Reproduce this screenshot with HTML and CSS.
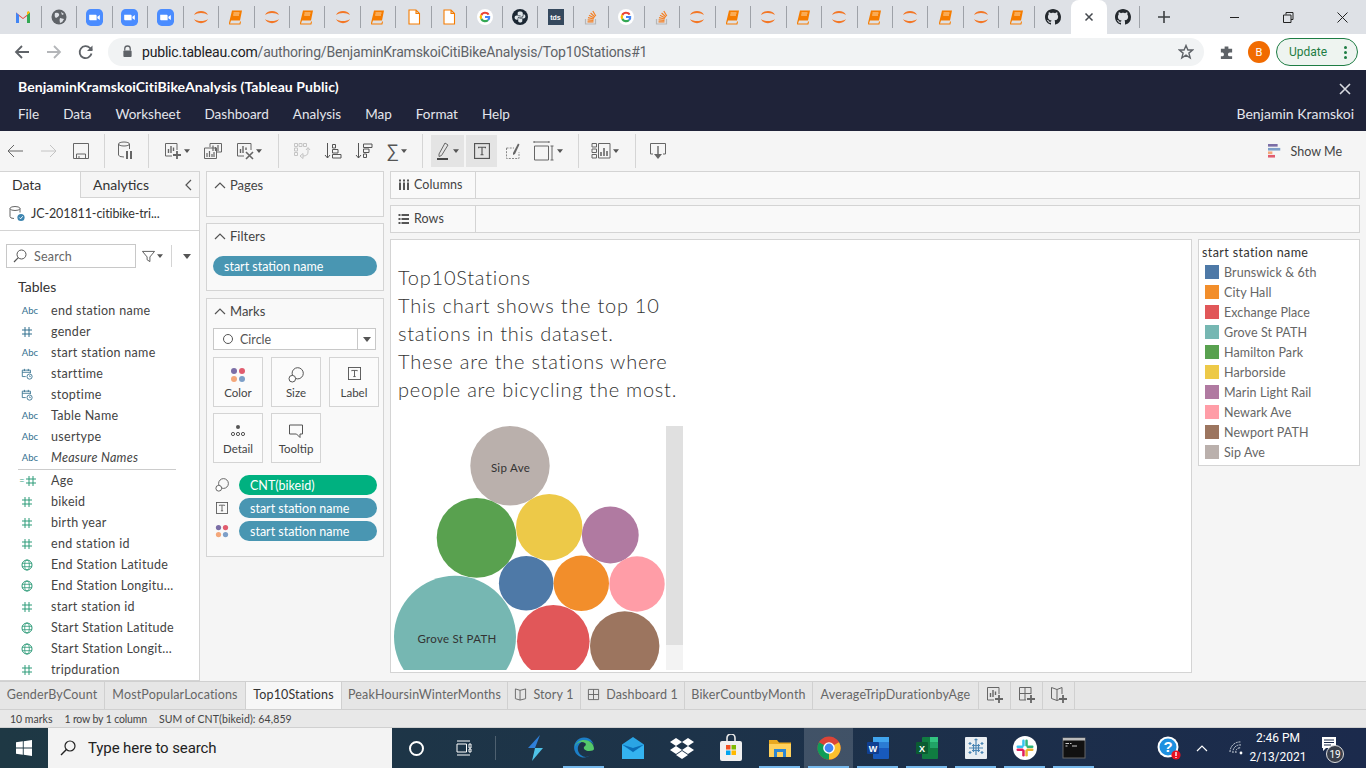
FILE: index.html
```html
<!DOCTYPE html>
<html lang="en">
<head>
<meta charset="utf-8">
<title>Top10Stations</title>
<link rel="stylesheet" href="styles.css">
</head>
<body>
<svg class="defs" width="0" height="0" aria-hidden="true">
  <symbol id="jup" viewBox="0 0 16 16"><path d="M1 6C3 0.5 13 0.5 15 6C11.5 3.2 4.5 3.2 1 6Z" fill="#f37726"/><path d="M1 10C3 15.5 13 15.5 15 10C11.5 12.8 4.5 12.8 1 10Z" fill="#f37726"/></symbol>
  <symbol id="book" viewBox="0 0 16 16"><path d="M4 1.5H14L12 11.5H3L2 14.5H11.5L12 12.5H13L12.4 15.5H1.2L1 14Z" fill="#f57c00"/><path d="M5.5 4H11.5M5.2 6H11" stroke="#ffd9a8" stroke-width="1"/></symbol>
  <symbol id="doc" viewBox="0 0 16 16"><path d="M3 1H10L13.5 4.5V15H3Z M10 1V4.5H13.5" fill="#fff" stroke="#f57c00" stroke-width="1.1"/></symbol>
  <symbol id="goog" viewBox="0 0 16 16"><circle cx="8" cy="8" r="8" fill="#fff"/><path d="M12.5 5.2A5.3 5.3 0 0 0 3.4 5.3L5.2 6.7A3.2 3.2 0 0 1 10.6 5.9Z" fill="#ea4335"/><path d="M3.4 5.3A5.3 5.3 0 0 0 3.4 10.7L5.2 9.3A3.2 3.2 0 0 1 5.2 6.7Z" fill="#fbbc05"/><path d="M3.4 10.7A5.3 5.3 0 0 0 11.8 11.7L10.1 10.4A3.2 3.2 0 0 1 5.2 9.3Z" fill="#34a853"/><path d="M13.2 7H8V9.1H11A2.6 2.6 0 0 1 10.1 10.4L11.8 11.7A5.3 5.3 0 0 0 13.2 7Z" fill="#4285f4"/></symbol>
  <symbol id="github" viewBox="0 0 16 16"><path fill="#24292e" d="M8 0C3.58 0 0 3.58 0 8c0 3.54 2.29 6.53 5.47 7.59.4.07.55-.17.55-.38 0-.19-.01-.82-.01-1.49-2.01.37-2.53-.49-2.69-.94-.09-.23-.48-.94-.82-1.13-.28-.15-.68-.52-.01-.53.63-.01 1.08.58 1.23.82.72 1.21 1.87.87 2.33.66.07-.52.28-.87.51-1.07-1.78-.2-3.64-.89-3.64-3.95 0-.87.31-1.59.82-2.15-.08-.2-.36-1.02.08-2.12 0 0 .67-.21 2.2.82.64-.18 1.32-.27 2-.27s1.36.09 2 .27c1.53-1.04 2.2-.82 2.2-.82.44 1.1.16 1.92.08 2.12.51.56.82 1.27.82 2.15 0 3.07-1.87 3.75-3.65 3.95.29.25.54.73.54 1.48 0 1.07-.01 1.93-.01 2.2 0 .21.15.46.55.38A8 8 0 0 0 16 8c0-4.42-3.58-8-8-8z"/></symbol>
  <symbol id="so" viewBox="0 0 16 16"><path d="M2.5 10V15H12.5V10" fill="none" stroke="#b7b7b7" stroke-width="1.2"/><path d="M4.5 12.8H10.5M4.6 10.8L10.5 11.4M5 8.6L10.8 10M6 6.3L11.2 9M7.6 4L12 8M9.8 2L12.8 7" stroke="#f48024" stroke-width="1.2" fill="none"/></symbol>
  <symbol id="zoomcam" viewBox="0 0 16 16"><rect width="16" height="16" rx="4.5" fill="#4a8cff"/><path d="M3 5.5H9.2Q10 5.5 10 6.3V10.5H3.8Q3 10.5 3 9.7ZM10.7 7.3L13 5.6V10.4L10.7 8.7Z" fill="#fff"/></symbol>
  <symbol id="colors" viewBox="0 0 16 16"><circle cx="4" cy="4" r="3" fill="#7b6ea6"/><circle cx="12" cy="4" r="3" fill="#e15c6e"/><circle cx="4" cy="12" r="3" fill="#f4a77a"/><circle cx="12" cy="12" r="3" fill="#7d9fc8"/></symbol>
  <symbol id="size" viewBox="0 0 16 16"><circle cx="9.7" cy="6.3" r="5.6" fill="none" stroke="#555" stroke-width="1"/><circle cx="4.3" cy="11.7" r="3.3" fill="#fff" stroke="#555" stroke-width="1"/></symbol>
  <symbol id="tbox" viewBox="0 0 14 14"><rect x=".5" y=".5" width="13" height="13" fill="none" stroke="#555"/><path d="M4 4.5V3.7H10V4.5M7 3.7V10.3M5.7 10.3H8.3" fill="none" stroke="#555"/></symbol>
  <symbol id="hash" viewBox="0 0 12 12"><path d="M4 1V11M8 1V11M1 4H11M1 8H11" fill="none" stroke="currentColor" stroke-width="1"/></symbol>
  <symbol id="globe" viewBox="0 0 12 12"><circle cx="6" cy="6" r="5" fill="none" stroke="currentColor"/><ellipse cx="6" cy="6" rx="2.3" ry="5" fill="none" stroke="currentColor" stroke-width=".8"/><path d="M1 4.3H11M1 7.7H11" stroke="currentColor" stroke-width=".8"/></symbol>
  <symbol id="cal" viewBox="0 0 14 14"><path d="M5.5 10H1.5V2.5H11V6M1.5 5H11M4 1V3.5M8.5 1V3.5" fill="none" stroke="currentColor"/><circle cx="10" cy="10" r="3" fill="#fff" stroke="currentColor"/><path d="M10 8.5V10H11.5" fill="none" stroke="currentColor" stroke-width=".8"/></symbol>
  <symbol id="caret" viewBox="0 0 8 5"><path d="M0 0H8L4 5Z" fill="currentColor"/></symbol>
  <symbol id="chev" viewBox="0 0 12 7"><path d="M1 6L6 1L11 6" fill="none" stroke="#555" stroke-width="1.2"/></symbol>
  <symbol id="plus-ws" viewBox="0 0 18 18"><path d="M8 14H1.5V1.5H13V8" fill="none" stroke="#666"/><path d="M4.5 11V7M7 11V4M9.5 9V5.5" stroke="#666" stroke-width="1.4"/><path d="M13 9V17M9 13H17" stroke="#666" stroke-width="1.8"/></symbol>
  <symbol id="plus-db" viewBox="0 0 18 18"><path d="M8 14H1.5V1.5H13V8M7 1.5V14M1.5 7.5H13" fill="none" stroke="#666"/><path d="M13 9V17M9 13H17" stroke="#666" stroke-width="1.8"/></symbol>
  <symbol id="plus-st" viewBox="0 0 18 18"><path d="M7 3.5L1.5 1.5V12.5L7 14.5ZM7 3.5L12 1.5V8M7 14.5L9 13.7" fill="none" stroke="#666"/><path d="M13 9V17M9 13H17" stroke="#666" stroke-width="1.8"/></symbol>
</svg>

<header class="chrome">
  <div class="tabstrip">
    <div class="ftab"><svg viewBox="0 0 16 16" class="fav"><path d="M1 14V3.5L8 9L15 3.5V14H12V7L8 10L4 7V14Z" fill="#ea4335"/><path d="M1 14V3.5L4 6V14Z" fill="#4285f4"/><path d="M15 14V3.5L12 6V14Z" fill="#34a853"/><path d="M12 6L15 3.5L13.5 2L12 3Z" fill="#fbbc05"/></svg></div>
    <div class="ftab"><svg viewBox="0 0 16 16" class="fav"><circle cx="8" cy="8" r="7.5" fill="#5f6368"/><path d="M4 4Q7 3 8 5T5 9Q3 8 4 4ZM9 9L13 10Q12 13 9 14Q8 11 9 9ZM10 3L13 5L11 6Z" fill="#dee1e6"/></svg></div>
    <div class="ftab"><svg class="fav fav-l"><use href="#zoomcam"/></svg></div>
    <div class="ftab"><svg class="fav fav-l"><use href="#zoomcam"/></svg></div>
    <div class="ftab"><svg class="fav fav-l"><use href="#zoomcam"/></svg></div>
    <div class="ftab"><svg class="fav"><use href="#jup"/></svg></div>
    <div class="ftab"><svg class="fav"><use href="#book"/></svg></div>
    <div class="ftab"><svg class="fav"><use href="#jup"/></svg></div>
    <div class="ftab"><svg class="fav"><use href="#book"/></svg></div>
    <div class="ftab"><svg class="fav"><use href="#jup"/></svg></div>
    <div class="ftab"><svg class="fav"><use href="#book"/></svg></div>
    <div class="ftab"><svg class="fav"><use href="#doc"/></svg></div>
    <div class="ftab"><svg class="fav"><use href="#doc"/></svg></div>
    <div class="ftab"><svg class="fav"><use href="#goog"/></svg></div>
    <div class="ftab"><svg viewBox="0 0 16 16" class="fav"><circle cx="8" cy="8" r="8" fill="#1b2733"/><path d="M8 2.5C5.5 2.5 5.7 3.6 5.7 5V6H8.6V6.6H4.6C3.4 6.6 2.6 7.3 2.6 8.6S3.4 10.8 4.6 10.8H5.7V9.3C5.7 8.4 6.4 7.8 7.2 7.8H9.6C10.3 7.8 10.8 7.2 10.8 6.5V4.2C10.8 3.1 9.7 2.5 8 2.5Z" fill="#dfe6ea"/><path d="M8 13.5C10.5 13.5 10.3 12.4 10.3 11V10H7.4V9.4H11.4C12.6 9.4 13.4 8.7 13.4 7.4S12.6 5.2 11.4 5.2V6.7C11.4 7.6 10.7 8.6 9.9 8.6H7.4C6.7 8.6 6.2 9.1 6.2 9.8V11.8C6.2 12.9 6.8 13.5 8 13.5Z" fill="#dfe6ea"/></svg></div>
    <div class="ftab"><span class="tds">tds</span></div>
    <div class="ftab"><svg class="fav"><use href="#so"/></svg></div>
    <div class="ftab"><svg class="fav"><use href="#goog"/></svg></div>
    <div class="ftab"><svg class="fav"><use href="#so"/></svg></div>
    <div class="ftab"><svg class="fav"><use href="#jup"/></svg></div>
    <div class="ftab"><svg class="fav"><use href="#book"/></svg></div>
    <div class="ftab"><svg class="fav"><use href="#jup"/></svg></div>
    <div class="ftab"><svg class="fav"><use href="#book"/></svg></div>
    <div class="ftab"><svg class="fav"><use href="#jup"/></svg></div>
    <div class="ftab"><svg class="fav"><use href="#book"/></svg></div>
    <div class="ftab"><svg class="fav"><use href="#jup"/></svg></div>
    <div class="ftab"><svg class="fav"><use href="#book"/></svg></div>
    <div class="ftab"><svg class="fav"><use href="#jup"/></svg></div>
    <div class="ftab"><svg class="fav"><use href="#book"/></svg></div>
    <div class="ftab no-sep"><svg class="fav"><use href="#github"/></svg></div>
    <div class="atab"><svg viewBox="0 0 10 10" class="x-ic"><path d="M1.5 1.5L8.5 8.5M8.5 1.5L1.5 8.5" stroke="#45494e" stroke-width="1.5"/></svg></div>
    <div class="ftab gh2"><svg class="fav"><use href="#github"/></svg></div>
    <svg viewBox="0 0 12 12" class="plus-ic"><path d="M6 0V12M0 6H12" stroke="#3c4043" stroke-width="1.6"/></svg>
    <div class="winctl">
      <svg viewBox="0 0 11 11" class="wbtn"><path d="M1 5.5H10" stroke="#222" stroke-width="1"/></svg>
      <svg viewBox="0 0 11 11" class="wbtn"><path d="M3 2.5V.5H10V7.5H8M.5 3H8V10.5H.5Z" fill="none" stroke="#222"/></svg>
      <svg viewBox="0 0 11 11" class="wbtn"><path d="M.5 .5L10.5 10.5M10.5 .5L.5 10.5" stroke="#222"/></svg>
    </div>
  </div>
  <div class="addrbar">
    <svg viewBox="0 0 16 16" class="nav-ic"><path d="M15 8H2M8 2L2 8L8 14" fill="none" stroke="#5f6368" stroke-width="1.8"/></svg>
    <svg viewBox="0 0 16 16" class="nav-ic"><path d="M1 8H14M8 2L14 8L8 14" fill="none" stroke="#b4b6b9" stroke-width="1.8"/></svg>
    <svg viewBox="0 0 16 16" class="nav-ic"><path d="M13.5 9.5A6 6 0 1 1 12 4L14 6" fill="none" stroke="#5f6368" stroke-width="1.8"/><path d="M14.5 1.5V7H9Z" fill="#5f6368"/></svg>
    <div class="omni">
      <svg viewBox="0 0 12 14" class="lock"><path d="M3 6V4A3 3 0 0 1 9 4V6" fill="none" stroke="#5f6368" stroke-width="1.4"/><rect x="1.5" y="6" width="9" height="7" rx="1" fill="#5f6368"/></svg>
      <span class="url"><b>public.tableau.com</b>/authoring/BenjaminKramskoiCitiBikeAnalysis/Top10Stations#1</span>
      <svg viewBox="0 0 16 16" class="star"><path d="M8 1.5L9.9 6H14.7L10.9 9.1L12.2 14L8 11.2L3.8 14L5.1 9.1L1.3 6H6.1Z" fill="none" stroke="#5f6368" stroke-width="1.4"/></svg>
    </div>
    <svg viewBox="0 0 16 16" class="ext"><path d="M6 1.5H10V4H14V8H11.5A2 2 0 0 0 11.5 12H14V15H2V12H4A2.2 2.2 0 0 0 4 8H2V4H6Z" fill="#5f6368"/></svg>
    <span class="avatar">B</span>
    <div class="update"><span>Update</span><span class="dots"><i></i><i></i><i></i></span></div>
  </div>
</header>

<div class="tb-head">
  <div class="tb-title">BenjaminKramskoiCitiBikeAnalysis (Tableau Public)</div>
  <svg viewBox="0 0 12 12" class="tb-close"><path d="M1 1L11 11M11 1L1 11" stroke="#d8dae0" stroke-width="1.6"/></svg>
  <nav class="tb-menu">
    <span>File</span><span>Data</span><span>Worksheet</span><span>Dashboard</span><span>Analysis</span><span>Map</span><span>Format</span><span>Help</span>
    <em class="tb-user">Benjamin Kramskoi</em>
  </nav>
</div>

<div class="tools">
  <div class="tg g1">
    <svg viewBox="0 0 18 18" class="ti"><path d="M17 9H2M8 3L2 9L8 15" fill="none" stroke="#666"/></svg>
    <svg viewBox="0 0 18 18" class="ti"><path d="M1 9H16M10 3L16 9L10 15" fill="none" stroke="#c4c4c4"/></svg>
    <svg viewBox="0 0 18 18" class="ti ti-save"><path d="M1.5 1.5H16.5V16.5H1.5ZM4.5 16V12H13.5V16M7 16V14" fill="none" stroke="#666"/></svg>
  </div>
  <div class="tg g2">
    <svg viewBox="0 0 18 20" class="ti ti20"><ellipse cx="7" cy="3" rx="5.5" ry="2" fill="none" stroke="#666"/><path d="M1.5 3V14Q1.5 16 7 16M12.5 3V8" fill="none" stroke="#666"/><path d="M10 10V18M14 10V18" stroke="#666" stroke-width="2"/></svg>
  </div>
  <div class="tg g3">
    <span class="tw"><svg class="ti"><use href="#plus-ws"/></svg><svg class="cr"><use href="#caret"/></svg></span>
    <svg viewBox="0 0 20 18" class="ti ti20w"><path d="M7 5V1.5H18.5V10H13.5M1.5 6H13.5V16.5H1.5Z" fill="#f5f5f5" stroke="#666"/><path d="M4 15V11M6.5 15V9M9 15V12M11 15V10M10 9V3.5M12.5 9V5M15 9V3" stroke="#666" stroke-width="1.2"/></svg>
    <span class="tw"><svg viewBox="0 0 18 18" class="ti"><path d="M8 14H1.5V1.5H15V8" fill="none" stroke="#666"/><path d="M4.5 11V7M7 11V4M10 8V5.5" stroke="#666" stroke-width="1.4"/><path d="M10 10L17 17M17 10L10 17" stroke="#666" stroke-width="1.6"/></svg><svg class="cr"><use href="#caret"/></svg></span>
  </div>
  <div class="tg g4">
    <svg viewBox="0 0 18 18" class="ti"><path d="M1.5 1.5H4.5V4.5H1.5ZM6 1.5H9V4.5H6ZM10.5 1.5H13.5V4.5H10.5ZM1.5 6H4.5V9H1.5ZM1.5 10.5H4.5V13.5H1.5Z" fill="none" stroke="#c4c4c4"/><path d="M15 6V10Q15 14 10 14M7 14L10 11.5V16.5ZM13 8L15 5.5L17 8" fill="none" stroke="#c4c4c4"/></svg>
    <svg viewBox="0 0 18 18" class="ti"><path d="M3.5 1V16M1 13L3.5 16L6 13" fill="none" stroke="#555"/><path d="M8.5 2.5H11.5V6H8.5ZM8.5 7.5H14V11H8.5ZM8.5 12.5H17V16H8.5Z" fill="none" stroke="#555"/></svg>
    <svg viewBox="0 0 18 18" class="ti"><path d="M3.5 1V16M1 13L3.5 16L6 13" fill="none" stroke="#555"/><path d="M8.5 2H17V5.5H8.5ZM8.5 7H14V10.5H8.5ZM8.5 12H11.5V15.5H8.5Z" fill="none" stroke="#555"/></svg>
    <span class="tw"><span class="sigma">∑</span><svg class="cr"><use href="#caret"/></svg></span>
  </div>
  <div class="tg g5">
    <span class="tbtn hl"><svg viewBox="0 0 14 20" class="ti ti-h"><path d="M3 13L9 2L12 4L5.5 14.5L3 15.5Z" fill="none" stroke="#666"/><path d="M1 18H12" stroke="#444" stroke-width="2"/></svg><svg class="cr"><use href="#caret"/></svg></span>
    <span class="tbtn ts"><svg class="ti ti-t"><use href="#tbox"/></svg></span>
    <svg viewBox="0 0 18 18" class="ti"><path d="M1.5 6H9M1.5 6V16.5H14V10" fill="none" stroke="#888" stroke-dasharray="2 1.2"/><path d="M8 11L13 1.5L14.5 2.5L10 12L8 13Z" fill="#666"/></svg>
    <span class="tw fitw"><svg viewBox="0 0 22 20" class="ti ti-fit"><path d="M1 1H16M1 0V2M16 0V2M1.5 5H15.5V19H1.5ZM19 5V19M17.5 5H20.5M17.5 19H20.5" fill="none" stroke="#666"/></svg><svg class="cr"><use href="#caret"/></svg></span>
  </div>
  <div class="tg g6">
    <span class="tw"><svg viewBox="0 0 20 18" class="ti ti20w"><path d="M1 1.5H5.5V5H1ZM1 7H5.5V10.5H1ZM1 12.5H5.5V16H1ZM7.5 1.5H19V16H7.5Z" fill="none" stroke="#666"/><path d="M10 14V10M13 14V6M16 14V9" stroke="#666" stroke-width="1.6"/></svg><svg class="cr"><use href="#caret"/></svg></span>
  </div>
  <div class="tg g7">
    <svg viewBox="0 0 18 18" class="ti"><path d="M4 12H1.5V1.5H16.5V12H14" fill="none" stroke="#666"/><path d="M9 4V13" stroke="#666" stroke-width="1.4"/><path d="M5 12H13L9 17Z" fill="#666"/></svg>
  </div>
  <div class="showme">
    <svg viewBox="0 0 16 16" class="sm-ic"><rect x="0" y="0" width="11" height="3" fill="#7b6ea6"/><rect x="0" y="4.5" width="14" height="3" fill="#7d9fc8"/><rect x="0" y="8.5" width="5" height="3" fill="#f4a77a"/><rect x="0" y="12.5" width="8" height="3" fill="#e15c6e"/></svg>
    <span>Show Me</span>
  </div>
</div>

<main class="work">
  <aside class="dpane">
    <div class="dtabs">
      <div class="dtab on">Data</div>
      <div class="dtab off">Analytics<svg viewBox="0 0 7 12" class="coll"><path d="M6 1L1 6L6 11" fill="none" stroke="#555" stroke-width="1.2"/></svg></div>
    </div>
    <div class="dsrc">
      <svg viewBox="0 0 16 16" class="dsrc-ic"><ellipse cx="6" cy="3" rx="5" ry="2" fill="none" stroke="#666"/><path d="M1 3V11Q1 13 5 13M11 3V7" fill="none" stroke="#666"/><circle cx="12" cy="12" r="3.6" fill="#3d85b0"/><path d="M10.3 12L11.6 13.3L13.7 10.8" fill="none" stroke="#fff"/></svg>
      <span>JC-201811-citibike-tri...</span>
    </div>
    <div class="dsearch">
      <div class="sbox"><svg viewBox="0 0 14 14" class="sic"><circle cx="8.5" cy="5.5" r="4.5" fill="none" stroke="#555"/><path d="M5.3 8.7L1 13" stroke="#555" stroke-width="1.2"/></svg><span>Search</span></div>
      <svg viewBox="0 0 14 14" class="fic"><path d="M.5 1.5H13.5L8.5 7.5V12.5L5.5 10.5V7.5Z" fill="none" stroke="#555"/></svg>
      <svg class="cr cr-d"><use href="#caret"/></svg>
      <i class="vsep"></i>
      <svg class="cr cr-e"><use href="#caret"/></svg>
    </div>
    <div class="tables">Tables</div>
    <ul class="fields">
      <li><span class="fi abc">Abc</span>end station name</li>
      <li><svg class="fi ic blue"><use href="#hash"/></svg>gender</li>
      <li><span class="fi abc">Abc</span>start station name</li>
      <li><svg class="fi ic blue"><use href="#cal"/></svg>starttime</li>
      <li><svg class="fi ic blue"><use href="#cal"/></svg>stoptime</li>
      <li><span class="fi abc">Abc</span>Table Name</li>
      <li><span class="fi abc">Abc</span>usertype</li>
      <li class="mn"><span class="fi abc">Abc</span><i>Measure Names</i></li>
      <li class="div"></li>
      <li><span class="fi calc"><b>=</b><svg class="ic grn"><use href="#hash"/></svg></span>Age</li>
      <li><svg class="fi ic grn"><use href="#hash"/></svg>bikeid</li>
      <li><svg class="fi ic grn"><use href="#hash"/></svg>birth year</li>
      <li><svg class="fi ic grn"><use href="#hash"/></svg>end station id</li>
      <li><svg class="fi ic grn"><use href="#globe"/></svg>End Station Latitude</li>
      <li><svg class="fi ic grn"><use href="#globe"/></svg>End Station Longitu...</li>
      <li><svg class="fi ic grn"><use href="#hash"/></svg>start station id</li>
      <li><svg class="fi ic grn"><use href="#globe"/></svg>Start Station Latitude</li>
      <li><svg class="fi ic grn"><use href="#globe"/></svg>Start Station Longit...</li>
      <li><svg class="fi ic grn"><use href="#hash"/></svg>tripduration</li>
    </ul>
  </aside>

  <section class="cards">
    <div class="card c-pages"><h3><svg class="chev"><use href="#chev"/></svg>Pages</h3></div>
    <div class="card c-filters"><h3><svg class="chev"><use href="#chev"/></svg>Filters</h3><div class="pill blue-p">start station name</div></div>
    <div class="card c-marks">
      <h3><svg class="chev"><use href="#chev"/></svg>Marks</h3>
      <div class="mselect"><span class="mcirc"></span><span class="mname">Circle</span><span class="mdrop"><svg class="cr cr-m"><use href="#caret"/></svg></span></div>
      <div class="mgrid">
        <div class="mbtn"><svg class="mic"><use href="#colors"/></svg>Color</div>
        <div class="mbtn"><svg class="mic"><use href="#size"/></svg>Size</div>
        <div class="mbtn"><svg class="mic mic-t"><use href="#tbox"/></svg>Label</div>
        <div class="mbtn"><svg viewBox="0 0 16 16" class="mic"><circle cx="8" cy="4" r="2" fill="#555"/><circle cx="3" cy="11" r="1.6" fill="none" stroke="#555"/><circle cx="8" cy="11" r="1.6" fill="none" stroke="#555"/><circle cx="13" cy="11" r="1.6" fill="none" stroke="#555"/></svg>Detail</div>
        <div class="mbtn"><svg viewBox="0 0 16 16" class="mic"><path d="M1.5 2H14.5V11H12V14.5L8.5 11H1.5Z" fill="none" stroke="#555"/></svg>Tooltip</div>
      </div>
      <div class="mrow"><svg class="mri"><use href="#size"/></svg><div class="pill grn-p">CNT(bikeid)</div></div>
      <div class="mrow"><svg class="mri mri-t"><use href="#tbox"/></svg><div class="pill blue-p">start station name</div></div>
      <div class="mrow"><svg class="mri"><use href="#colors"/></svg><div class="pill blue-p">start station name</div></div>
    </div>
  </section>

  <section class="rightcol">
    <div class="shelf"><div class="shead"><svg viewBox="0 0 12 12" class="shic"><path d="M2 3.5V11M6 3.5V11M10 3.5V11" stroke="#555" stroke-width="2"/><path d="M2 .5V2.5M6 .5V2.5M10 .5V2.5" stroke="#555" stroke-width="2"/></svg>Columns</div></div>
    <div class="shelf"><div class="shead"><svg viewBox="0 0 12 12" class="shic"><path d="M3.5 2H11M3.5 6H11M3.5 10H11M.5 2H2.5M.5 6H2.5M.5 10H2.5" stroke="#555" stroke-width="2"/></svg>Rows</div></div>
    <div class="vizrow">
      <div class="viz">
        <div class="vtitle">Top10Stations<br>This chart shows the top 10<br>stations in this dataset.<br>These are the stations where<br>people are bicycling the most.</div>
        <div class="chart">
          <svg viewBox="0 0 275 244" class="bubbles">
            <g transform="translate(-391 -426)">
              <circle cx="510" cy="465.7" r="39.7" fill="#bab0ac"/>
              <circle cx="476.6" cy="537.8" r="39.9" fill="#59a14f"/>
              <circle cx="549.2" cy="527.2" r="33.2" fill="#edc948"/>
              <circle cx="610.3" cy="535" r="28.4" fill="#b07aa1"/>
              <circle cx="526.2" cy="583.3" r="27.3" fill="#4e79a7"/>
              <circle cx="581.3" cy="583.3" r="27.7" fill="#f28e2b"/>
              <circle cx="637" cy="584" r="27.7" fill="#ff9da7"/>
              <circle cx="455" cy="636.8" r="61" fill="#76b7b2"/>
              <circle cx="553.3" cy="641.3" r="36.3" fill="#e15759"/>
              <circle cx="624.7" cy="646" r="34.7" fill="#9c755f"/>
              <text x="510.5" y="471.5" class="blabel">Sip Ave</text>
              <text x="457" y="642.5" class="blabel">Grove St PATH</text>
            </g>
          </svg>
          <div class="vscroll"><i></i></div>
        </div>
      </div>
      <div class="legend">
        <div class="ltitle">start station name</div>
        <div class="litem"><i class="sw s1"></i>Brunswick &amp; 6th</div>
        <div class="litem"><i class="sw s2"></i>City Hall</div>
        <div class="litem"><i class="sw s3"></i>Exchange Place</div>
        <div class="litem"><i class="sw s4"></i>Grove St PATH</div>
        <div class="litem"><i class="sw s5"></i>Hamilton Park</div>
        <div class="litem"><i class="sw s6"></i>Harborside</div>
        <div class="litem"><i class="sw s7"></i>Marin Light Rail</div>
        <div class="litem"><i class="sw s8"></i>Newark Ave</div>
        <div class="litem"><i class="sw s9"></i>Newport PATH</div>
        <div class="litem"><i class="sw s10"></i>Sip Ave</div>
      </div>
    </div>
  </section>
</main>

<div class="sheettabs">
  <div class="stab w1">GenderByCount</div>
  <div class="stab w2">MostPopularLocations</div>
  <div class="stab w3 act">Top10Stations</div>
  <div class="stab w4">PeakHoursinWinterMonths</div>
  <div class="stab w5"><svg viewBox="0 0 14 14" class="stic"><path d="M6.5 2.5L1.5 1V11.5L6.5 13ZM6.5 2.5L12.5 1V11.5L6.5 13" fill="none" stroke="#666"/></svg>Story 1</div>
  <div class="stab w6"><svg viewBox="0 0 14 14" class="stic"><path d="M1.5 1.5H12.5V12.5H1.5ZM7 1.5V12.5M1.5 7H12.5" fill="none" stroke="#666"/></svg>Dashboard 1</div>
  <div class="stab w7">BikerCountbyMonth</div>
  <div class="stab w8">AverageTripDurationbyAge</div>
  <div class="stab wi"><svg class="stadd"><use href="#plus-ws"/></svg></div>
  <div class="stab wi"><svg class="stadd"><use href="#plus-db"/></svg></div>
  <div class="stab wi"><svg class="stadd"><use href="#plus-st"/></svg></div>
</div>
<div class="status"><span>10 marks</span><span class="st2">1 row by 1 column</span><span class="st3">SUM of CNT(bikeid): 64,859</span></div>

<footer class="taskbar">
  <div class="start"><svg viewBox="0 0 16 16" class="win"><path d="M0 2.3L6.8 1.3V7.6H0ZM7.7 1.2L16 0V7.6H7.7ZM0 8.4H6.8V14.7L0 13.7ZM7.7 8.4H16V16L7.7 14.8Z" fill="#fff"/></svg></div>
  <div class="tsearch"><svg viewBox="0 0 16 16" class="tsic"><circle cx="10" cy="6" r="5" fill="none" stroke="#222" stroke-width="1.2"/><path d="M6.4 9.6L1 15" stroke="#222" stroke-width="1.4"/></svg><span>Type here to search</span></div>
  <div class="tcell"><span class="cortana"></span></div>
  <div class="tcell"><svg viewBox="0 0 16 16" class="tv"><path d="M1 1H14M1 15H14M1 4H10.5V12H1ZM13 4H15V8H13ZM13 9H15V12H13Z" fill="none" stroke="#fff" stroke-width="1"/></svg></div>
  <i class="tksep"></i>
  <div class="tcell"><svg viewBox="0 0 20 26" class="tapp"><path d="M15 0L3 13H10Z" fill="#2f7fd8"/><path d="M18 13H10L7 26Z" fill="#4fc3e8"/></svg></div>
  <div class="tcell run"><svg viewBox="0 0 24 24" class="tico"><path d="M21 16A10 10 0 1 1 22 10C21 6 17 4.5 13 5C8 5.5 5 10 6 14.5C7 19 12 22 16 20.5C18 20 20 18 21 16Z" fill="#1c7fc8"/><path d="M22 13C22 8 18 4 12 4C8 4 4 6.5 2.7 10.5C5 6 10 5 13 7C15 8.4 13 10 12 11C11 13 14 15 17 15C20 15 22 14 22 13Z" fill="#54c96a"/></svg></div>
  <div class="tcell"><svg viewBox="0 0 24 24" class="tico"><path d="M1 8.5L12 1L23 8.5V23H1Z" fill="#2aa4e4"/><path d="M1 8.5L12 16L23 8.5L12 12Z" fill="#0a6cb6"/><path d="M1 9L12 16.5L23 9V23H1Z" fill="#34b3f0"/></svg></div>
  <div class="tcell"><svg viewBox="0 0 24 24" class="tico"><path d="M6 2L12 6L6 10L0 6ZM18 2L24 6L18 10L12 6ZM6 10L12 14L6 18L0 14ZM18 10L24 14L18 18L12 14ZM6 19L12 15L18 19L12 23Z" fill="#fff"/></svg></div>
  <div class="tcell"><svg viewBox="0 0 24 28" class="tico tico-t"><path d="M8 7V4A4 4 0 0 1 16 4V7" fill="none" stroke="#e8e8e8" stroke-width="1.6"/><rect x="1" y="7" width="22" height="20" rx="2" fill="#f0f0f0"/><rect x="7" y="11" width="4.5" height="4.5" fill="#f25022"/><rect x="12.5" y="11" width="4.5" height="4.5" fill="#7fba00"/><rect x="7" y="16.5" width="4.5" height="4.5" fill="#00a4ef"/><rect x="12.5" y="16.5" width="4.5" height="4.5" fill="#ffb900"/></svg></div>
  <div class="tcell run"><svg viewBox="0 0 24 24" class="tico"><path d="M1 4H9L11 6.5H23V21H1Z" fill="#e9a920"/><path d="M1 8H23V21H1Z" fill="#ffd15c"/><path d="M6 21V13H18V21H15V16H9V21Z" fill="#2b86d3"/></svg></div>
  <div class="tcell act run"><svg viewBox="0 0 24 24" class="tico"><circle cx="12" cy="12" r="11.5" fill="#db4437"/><path d="M12 12L22 6.2A11.5 11.5 0 0 1 12 23.5Z" fill="#fbc02d"/><path d="M12 12L12 23.5A11.5 11.5 0 0 1 2 6.2Z" fill="#0f9d58"/><circle cx="12" cy="12" r="5.8" fill="#fff"/><circle cx="12" cy="12" r="4.4" fill="#4285f4"/></svg></div>
  <div class="tcell run"><svg viewBox="0 0 24 24" class="tico"><rect x="7" y="1" width="16" height="22" rx="1" fill="#185abd"/><rect x="7" y="1" width="16" height="5.5" fill="#41a5ee"/><rect x="7" y="6.5" width="16" height="5.5" fill="#2b7cd3"/><rect x="1" y="6" width="12" height="12" rx="1" fill="#103f91"/><text x="7" y="15.6" class="wl">W</text></svg></div>
  <div class="tcell run"><svg viewBox="0 0 24 24" class="tico"><rect x="7" y="1" width="16" height="22" rx="1" fill="#107c41"/><rect x="15" y="1" width="8" height="5.5" fill="#33c481"/><rect x="15" y="6.5" width="8" height="5.5" fill="#21a366"/><rect x="1" y="6" width="12" height="12" rx="1" fill="#0b5c32"/><text x="7" y="15.6" class="wl">X</text></svg></div>
  <div class="tcell run"><svg viewBox="0 0 24 24" class="tico"><rect x="1" y="1" width="22" height="22" rx="1" fill="#e9eef2"/><path d="M12 5V19M5 12H19M12 2.5V5M10.5 3.7H13.5M18 6V9M16.5 7.5H19.5M18 15V18M16.5 16.5H19.5M6 6V9M4.5 7.5H7.5M6 15V18M4.5 16.5H7.5M8 9.5H16M8 14.5H16M9.5 8V16M14.5 8V16" stroke="#4b86b4" stroke-width="1.2" fill="none"/></svg></div>
  <div class="tcell run"><svg viewBox="0 0 24 24" class="tico"><circle cx="12" cy="12" r="12" fill="#fff"/><rect x="9.2" y="3.5" width="2.5" height="7" rx="1.2" fill="#36c5f0"/><rect x="3.5" y="9.5" width="7" height="2.5" rx="1.2" fill="#36c5f0"/><rect x="12.3" y="3.5" width="2.5" height="7" rx="1.2" fill="#2eb67d"/><rect x="13.5" y="9.5" width="7" height="2.5" rx="1.2" fill="#2eb67d"/><rect x="12.3" y="13.5" width="2.5" height="7" rx="1.2" fill="#ecb22e"/><rect x="13.5" y="12.4" width="7" height="2.5" rx="1.2" fill="#ecb22e"/><rect x="9.2" y="13.5" width="2.5" height="7" rx="1.2" fill="#e01e5a"/><rect x="3.5" y="12.4" width="7" height="2.5" rx="1.2" fill="#e01e5a"/></svg></div>
  <div class="tcell run"><svg viewBox="0 0 24 24" class="tico"><rect x="1" y="2" width="22" height="20" fill="#111" stroke="#666"/><rect x="1" y="2" width="22" height="2.5" fill="#bbb"/><path d="M3.5 7.5H7M3.5 10H5.5M8 7.5H9.5M10 10H15" stroke="#ccc"/></svg></div>
  <div class="tray">
    <span class="help"><svg viewBox="0 0 24 24" class="hic"><circle cx="11" cy="11" r="10.5" fill="#fff"/><circle cx="11" cy="11" r="8.5" fill="#1e90e0"/><text x="11" y="16" class="hq">?</text><circle cx="19" cy="19" r="4.6" fill="#e81123"/><path d="M19 16V20M19 21V22" stroke="#fff" stroke-width="1.4"/></svg></span>
    <svg viewBox="0 0 12 8" class="upc"><path d="M1 7L6 2L11 7" fill="none" stroke="#fff" stroke-width="1.2"/></svg>
    <svg viewBox="0 0 16 16" class="wifi"><path d="M2 12A10 10 0 0 1 13 2M5 13A7 7 0 0 1 13 5M8 13A4 4 0 0 1 13 8" fill="none" stroke="#cfd6de" stroke-width="1" stroke-dasharray="2 .8"/><circle cx="13" cy="13" r="1.4" fill="#fff"/></svg>
    <div class="clock"><span>2:46 PM</span><span>2/13/2021</span></div>
    <span class="notif"><svg viewBox="0 0 16 16" class="nic"><path d="M1 1H15V12H5L2 15V12H1Z" fill="#fff"/><path d="M3 4H13M3 6.5H13M3 9H10" stroke="#1b2a4b"/></svg><b class="nbadge">19</b></span>
  </div>
</footer>
</body>
</html>
```

FILE: styles.css
```css
* { box-sizing: border-box; }
html, body { margin: 0; padding: 0; }
body {
  width: 1366px; height: 768px; overflow: hidden;
  font-family: Lato, "Open Sans", sans-serif;
  display: flex; flex-direction: column;
  background: #f5f5f5; color: #333;
}
.defs { position: absolute; }
i, em { font-style: normal; }
ul { list-style: none; margin: 0; padding: 0; }
h3 { margin: 0; font-weight: 400; }

/* browser chrome */
.chrome { height: 70px; flex: none; background: #fff; }
.tabstrip { height: 34px; background: #dee1e6; display: flex; align-items: center; padding-left: 6.26px; }
.ftab { width: 35.48px; height: 22px; flex: none; display: flex; align-items: center; justify-content: center; border-right: 1px solid #9ea2a8; }
.no-sep { border-right: 0; }
.fav { width: 16px; height: 16px; display: block; }
.fav-l { width: 17px; height: 17px; }
.tds { width: 16px; height: 16px; background: #35495e; color: #fff; font: 700 7px "Liberation Sans", sans-serif; display: flex; align-items: center; justify-content: center; }
.atab { width: 36px; height: 34px; background: #fff; border-radius: 8px 8px 0 0; margin-left: 1px; display: flex; align-items: center; justify-content: center; flex: none; }
.x-ic { width: 10px; height: 10px; }
.gh2 { border-right: 1px solid #9ea2a8; width: 33px; }
.plus-ic { width: 12px; height: 12px; margin-left: 18px; }
.winctl { margin-left: auto; display: flex; width: 138px; justify-content: space-between; padding-right: 18px; padding-left: 1px; }
.wbtn { width: 11px; height: 11px; }
.addrbar { height: 36px; display: flex; align-items: center; padding-left: 14px; }
.nav-ic { width: 16px; height: 16px; margin-right: 16px; }
.omni { width: 1096px; height: 28px; margin-left: -2px; margin-top: -1px; border-radius: 14px; background: #f1f3f4; display: flex; align-items: center; padding-left: 14px; padding-right: 10px; }
.lock { width: 11px; height: 13px; margin-right: 9px; }
.url { font: 400 14px Roboto, sans-serif; letter-spacing: -.18px; color: #5f6368; white-space: nowrap; }
.url b { font-weight: 400; color: #202124; }
.star { width: 16px; height: 16px; margin-left: auto; }
.ext { width: 15px; height: 15px; margin-left: 15px; }
.avatar { width: 22px; height: 22px; margin-left: 14px; border-radius: 50%; background: #f16b00; color: #fff; font: 400 11px Roboto, sans-serif; display: flex; align-items: center; justify-content: center; }
.update { width: 82px; height: 28px; margin-left: 6px; border-radius: 14px; border: 1px solid #1e7d44; background: #eef4f0; color: #1e7d44; font: 400 12px Roboto, sans-serif; display: flex; align-items: center; padding-left: 12px; justify-content: space-between; padding-right: 10px; }
.dots { display: flex; flex-direction: column; gap: 2px; }
.dots i { width: 3px; height: 3px; border-radius: 50%; background: #1e7d44; }

/* tableau header */
.tb-head { height: 61px; flex: none; background: #1f2339; color: #e4e6ec; position: relative; padding: 9px 18px 0; }
.tb-title { font-size: 14px; font-weight: 700; color: #fff; line-height: 16px; letter-spacing: .08px; }
.tb-close { position: absolute; top: 13px; right: 15px; width: 12px; height: 12px; }
.tb-menu { display: flex; gap: 24px; font-size: 13.5px; line-height: 18px; margin-top: 10px; }
.tb-user { margin-left: auto; margin-right: -6px; font-size: 14px; }

/* toolbar */
.tools { height: 40px; flex: none; background: #f5f5f5; display: flex; align-items: center; position: relative; }
.tg { height: 34px; display: flex; align-items: center; border-right: 1px solid #d5d5d5; flex: none; }
.g1 { width: 105px; padding-left: 6px; gap: 16px; }
.ti-save { margin-left: -2px; }
.g2 { width: 44px; padding-left: 12px; }
.g3 { width: 130px; padding-left: 15px; gap: 13px; }
.g4 { width: 144px; padding-left: 14px; gap: 13px; }
.g5 { width: 156px; padding-left: 8px; gap: 2px; }
.g6 { width: 57px; padding-left: 12px; }
.g7 { width: 40px; padding-left: 13px; border-right: 0; }
.ti { width: 18px; height: 18px; display: block; flex: none; }
.ti20 { height: 20px; width: 18px; }
.ti20w { width: 20px; }
.ti-h { width: 14px; height: 20px; }
.ti-fit { width: 22px; height: 20px; }
.ti-t { width: 16px; height: 16px; }
.fitw { margin-left: 8px; }
.tw { display: flex; align-items: center; gap: 2px; }
.cr { width: 6px; height: 4px; color: #555; display: block; flex: none; }
.sigma { font: 400 18px "Liberation Sans", sans-serif; color: #555; line-height: 20px; }
.tbtn { height: 32px; display: flex; align-items: center; justify-content: center; background: #e4e4e4; flex: none; }
.hl { width: 33px; gap: 3px; }
.ts { width: 31px; margin-right: 6px; }
.showme { position: absolute; right: 24px; top: 12px; display: flex; align-items: center; gap: 9px; font-size: 12.5px; color: #444; }
.sm-ic { width: 14px; height: 16px; }

/* work area */
.work { height: 510px; flex: none; display: flex; background: #f5f5f5; overflow: hidden; }
.dpane { width: 200px; flex: none; background: #fff; border-right: 1px solid #d4d4d4; border-bottom: 1px solid #d4d4d4; overflow: hidden; }
.dtabs { height: 27px; display: flex; font-size: 14px; border-top: 1px solid #d4d4d4; }
.dtab { line-height: 25px; padding-left: 12px; }
.on { width: 80px; }
.off { flex: 1; background: #f5f5f5; border-left: 1px solid #d4d4d4; border-bottom: 1px solid #d4d4d4; display: flex; align-items: center; justify-content: space-between; padding-right: 7px; }
.coll { width: 7px; height: 12px; }
.dsrc { height: 33px; display: flex; align-items: center; gap: 6px; padding-left: 9px; padding-bottom: 1px; border-bottom: 1px solid #d4d4d4; font-size: 12.5px; letter-spacing: -.1px; }
.dsrc-ic { width: 16px; height: 17px; flex: none; }
.dsearch { height: 24px; margin-top: 13px; display: flex; align-items: center; padding-left: 6px; }
.sbox { width: 130px; height: 24px; border: 1px solid #c8c8c8; display: flex; align-items: center; padding-left: 6px; gap: 7px; font-size: 12.5px; color: #666; letter-spacing: .2px; }
.sic { width: 14px; height: 14px; }
.fic { width: 13px; height: 13px; margin-left: 6px; }
.cr-d { margin-left: 2px; }
.vsep { width: 1px; height: 22px; background: #d4d4d4; margin-left: 8px; }
.cr-e { margin-left: 11px; width: 8px; height: 5px; }
.tables { font-size: 14px; color: #333; padding-left: 18px; line-height: 18px; margin-top: 10px; margin-bottom: 4px; }
.fields { font-size: 12.5px; letter-spacing: .3px; }
.fields li { height: 21px; display: flex; align-items: center; white-space: nowrap; position: relative; padding-left: 51px; color: #444; }
.fields .div { height: 0; margin: 1px 23px 0 18px; padding: 0; border-top: 1px solid #ccc; }
.fi { position: absolute; left: 21px; width: 18px; display: flex; justify-content: center; }
.abc { font: 400 9.5px Lato, sans-serif; color: #33708f; letter-spacing: 0; }
svg.fi { height: 12px; }
.ic { width: 12px; height: 12px; display: block; }
.blue { color: #33708f; }
.grn { color: #2d9b78; }
.calc { font-size: 9px; color: #2d9b78; align-items: center; left: 19px; }
.calc b { font-weight: 400; }
.mn i { font-style: italic; }

/* cards */
.cards { width: 190px; flex: none; padding: 0 6px; display: flex; flex-direction: column; }
.card { background: #f9f9f9; border: 1px solid #d4d4d4; flex: none; padding: 0 6px; }
.card h3 { display: flex; align-items: center; gap: 4px; font-size: 13px; line-height: 24px; color: #444; padding-left: 1px; }
.chev { width: 12px; height: 7px; flex: none; }
.c-pages { height: 46px; padding-top: 1px; }
.c-filters { height: 68px; margin-top: 6px; }
.c-filters .pill { margin-top: 8px; }
.c-marks { height: 259px; margin-top: 7px; }
.pill { height: 20px; border-radius: 10px; color: #fff; font-size: 12.5px; line-height: 22px; padding-left: 11px; white-space: nowrap; }
.blue-p { background: #4996b2; }
.grn-p { background: #00b180; }
.mselect { height: 22px; margin-top: 5px; width: 163px; border: 1px solid #c8c8c8; background: #fff; display: flex; align-items: center; padding-left: 9px; font-size: 12.5px; color: #555; }
.mcirc { width: 10px; height: 10px; border: 1px solid #555; border-radius: 50%; margin-right: 7px; }
.mdrop { margin-left: auto; width: 18px; height: 20px; border-left: 1px solid #c8c8c8; display: flex; align-items: center; justify-content: center; }
.cr-m { width: 8px; height: 5px; }
.mgrid { display: grid; grid-template-columns: repeat(3, 50px); gap: 6px 8px; margin-top: 7px; }
.mbtn { height: 50px; border: 1px solid #d4d4d4; background: #fbfbfb; display: flex; flex-direction: column; align-items: center; font-size: 11.5px; padding-top: 9px; color: #444; gap: 3px; }
.mic { width: 16px; height: 16px; display: block; flex: none; }
.mic-t { width: 13px; height: 13px; margin-bottom: 3px; }
.mrow { display: flex; align-items: center; gap: 8px; height: 20px; margin-bottom: 3px; }
.mgrid + .mrow { margin-top: 12px; }
.mrow .pill { flex: 1; }
.mri { width: 18px; height: 14px; flex: none; }
.mri-t { height: 12px; }

/* right column */
.rightcol { flex: 1; padding: 0 6px 0 0; display: flex; flex-direction: column; min-width: 0; }
.shelf { height: 28px; margin-bottom: 6px; flex: none; background: #f9f9f9; border: 1px solid #d4d4d4; display: flex; }
.shead { width: 85px; border-right: 1px solid #d4d4d4; display: flex; align-items: center; gap: 4px; padding-left: 7px; padding-bottom: 1px; font-size: 12.5px; color: #444; letter-spacing: .1px; }
.shic { width: 12px; height: 12px; }
.vizrow { display: flex; gap: 6px; align-items: flex-start; }
.viz { width: 802px; height: 434px; background: #fff; border: 1px solid #d4d4d4; padding: 23px 0 0 7px; }
.vtitle { font-size: 20px; font-weight: 300; letter-spacing: .75px; line-height: 28px; color: #333; height: 163px; white-space: nowrap; }
.chart { display: flex; margin-left: -7px; height: 244px; overflow: hidden; }
.bubbles { width: 275px; height: 244px; flex: none; overflow: hidden; }
.blabel { font: 400 11.5px Lato, sans-serif; text-anchor: middle; fill: #333; letter-spacing: .3px; }
.vscroll { width: 17px; height: 244px; background: #f3f3f3; flex: none; }
.vscroll i { display: block; height: 219px; background: #e0e0e0; }
.legend { width: 162px; height: 227px; background: #fff; border: 1px solid #d4d4d4; padding: 4px 3px 0; font-size: 12.5px; }
.ltitle { line-height: 17px; color: #333; margin-bottom: 1px; letter-spacing: .4px; }
.litem { height: 20px; display: flex; align-items: center; gap: 5px; color: #666; padding-left: 3px; letter-spacing: .1px; }
.sw { width: 14px; height: 14px; flex: none; }
.s1 { background: #4e79a7; } .s2 { background: #f28e2b; } .s3 { background: #e15759; }
.s4 { background: #76b7b2; } .s5 { background: #59a14f; } .s6 { background: #edc948; }
.s7 { background: #b07aa1; } .s8 { background: #ff9da7; } .s9 { background: #9c755f; }
.s10 { background: #bab0ac; }

/* sheet tabs */
.sheettabs { height: 29px; flex: none; display: flex; background: #e6e6e6; border-bottom: 1px solid #d0d0d0; border-top: 1px solid #d0d0d0; font-size: 12.5px; color: #666; letter-spacing: .15px; }
.stab { border-right: 1px solid #d0d0d0; display: flex; align-items: center; justify-content: center; gap: 6px; white-space: nowrap; flex: none; padding-bottom: 2px; }
.stab.act { background: #f7f7f7; color: #333; }
.w1 { width: 105px; } .w2 { width: 141px; } .w3 { width: 96px; } .w4 { width: 166px; }
.w5 { width: 73px; } .w6 { width: 104px; } .w7 { width: 128px; } .w8 { width: 166px; }
.wi { width: 32px; }
.stic { width: 13px; height: 13px; }
.stadd { width: 18px; height: 18px; }
.status { height: 18px; flex: none; background: #e8e8e8; font-size: 10.5px; color: #444; display: flex; align-items: center; padding-left: 10px; gap: 12px; border-bottom: 1px solid #d0d0d0; }
.st2 { letter-spacing: -.15px; }
.st3 { letter-spacing: .1px; }

/* taskbar */
.taskbar { height: 40px; flex: none; display: flex; align-items: stretch; background: linear-gradient(90deg, #1e3844 0%, #1d3349 50%, #1b2a4c 100%); }
.start { width: 48px; display: flex; align-items: center; justify-content: center; }
.win { width: 16px; height: 16px; }
.tsearch { width: 344px; background: #f3f3f3; display: flex; align-items: center; padding-left: 12px; gap: 12px; font: 400 15px Roboto, sans-serif; letter-spacing: -.1px; color: #222; }
.tsic { width: 16px; height: 16px; }
.tcell { width: 49px; flex: none; display: flex; align-items: center; justify-content: center; position: relative; }
.cortana { width: 15px; height: 15px; border: 2px solid #fff; border-radius: 50%; }
.tv { width: 16px; height: 16px; margin-right: 4px; }
.tksep { width: 1px; height: 24px; align-self: center; flex: none; margin: 0 14px 0 5px; background: rgba(255,255,255,.22); }
.tapp { width: 20px; height: 26px; }
.tico { width: 24px; height: 24px; }
.tico-t { height: 28px; }
.run::after { content: ""; position: absolute; left: 4px; right: 4px; bottom: 0; height: 2px; background: #76b9ed; }
.tcell.act { background: rgba(255,255,255,.16); }
.wl { font: 700 9px "Liberation Sans", sans-serif; fill: #fff; text-anchor: middle; }
.tray { flex: 1; display: flex; align-items: center; padding-left: 59px; }
.help { width: 24px; height: 24px; }
.hic { width: 24px; height: 24px; display: block; }
.hq { font: 700 15px "Liberation Sans", sans-serif; fill: #fff; text-anchor: middle; }
.upc { width: 12px; height: 8px; margin-left: 15px; }
.wifi { width: 16px; height: 16px; margin-left: 20px; }
.clock { display: flex; flex-direction: column; align-items: center; color: #fff; font: 400 12px Roboto, sans-serif; line-height: 19px; width: 60px; margin-left: 4px; }
.notif { position: relative; width: 26px; height: 28px; margin-left: 12px; }
.nic { width: 16px; height: 16px; position: absolute; left: 1px; top: 2px; }
.nbadge { position: absolute; left: 6px; top: 11px; width: 18px; height: 18px; border-radius: 50%; background: #3a3f4a; border: 1px solid #ddd; color: #fff; font: 400 10px Roboto, sans-serif; display: flex; align-items: center; justify-content: center; }
```
